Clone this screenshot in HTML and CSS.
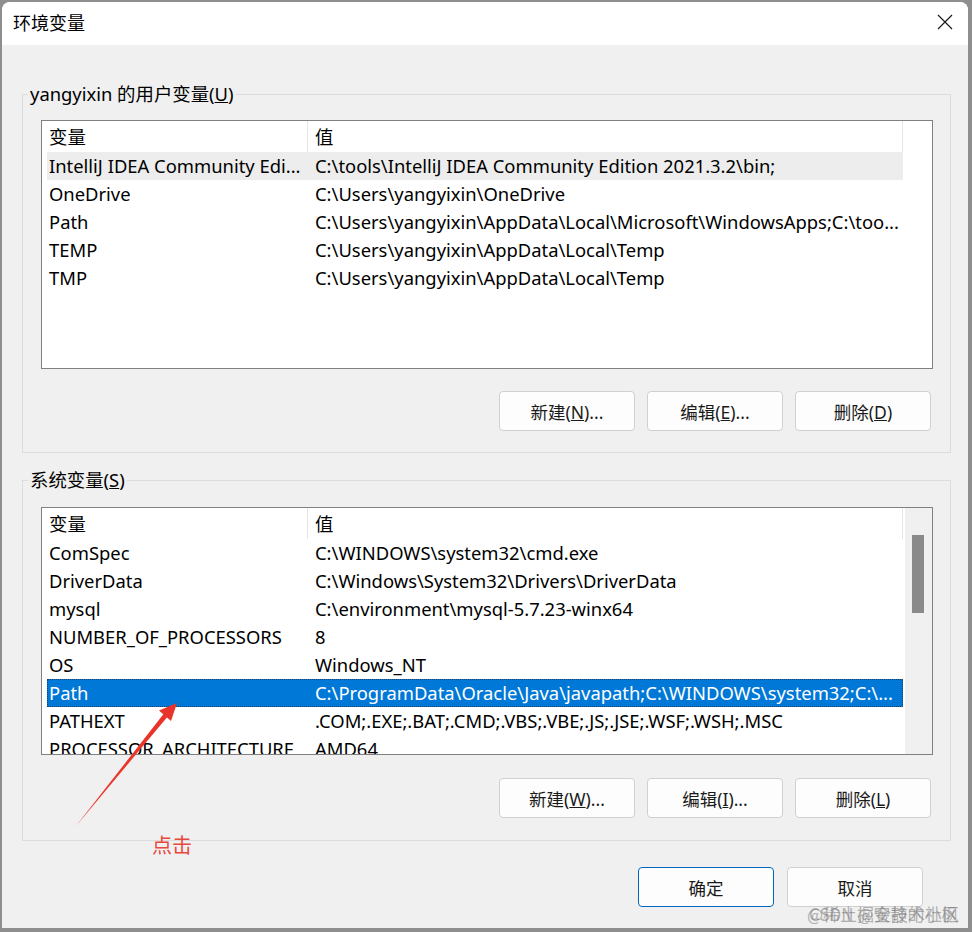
FILE: index.html
```html
<!doctype html>
<html>
<head>
<meta charset="utf-8">
<title>环境变量</title>
<link rel="stylesheet" href="styles.css">
</head>
<body>

<div class="dialog">
	<div class="titlebar">
		<span class="title">环境变量</span>
		<svg class="close" width="16" height="16" viewBox="0 0 16 16"><path d="M1 1 L15 15 M15 1 L1 15" stroke="#1a1a1a" stroke-width="1.2" fill="none"/></svg>
	</div>

	<div class="content">
		<fieldset class="group">
			<legend>yangyixin 的用户变量(<u>U</u>)</legend>
			<div class="list">
				<div class="list-main">
					<div class="list-head">
						<div class="col">变量</div>
						<div class="col">值</div>
					</div>
					<div class="row hover"><div class="cell">IntelliJ IDEA Community Edi...</div><div class="cell">C:\tools\IntelliJ IDEA Community Edition 2021.3.2\bin;</div></div>
					<div class="row"><div class="cell">OneDrive</div><div class="cell">C:\Users\yangyixin\OneDrive</div></div>
					<div class="row"><div class="cell">Path</div><div class="cell">C:\Users\yangyixin\AppData\Local\Microsoft\WindowsApps;C:\too...</div></div>
					<div class="row"><div class="cell">TEMP</div><div class="cell">C:\Users\yangyixin\AppData\Local\Temp</div></div>
					<div class="row"><div class="cell">TMP</div><div class="cell">C:\Users\yangyixin\AppData\Local\Temp</div></div>
				</div>
				<div class="list-side"></div>
			</div>
			<div class="buttons">
				<button class="btn">新建(<u>N</u>)...</button>
				<button class="btn">编辑(<u>E</u>)...</button>
				<button class="btn">删除(<u>D</u>)</button>
			</div>
		</fieldset>

		<fieldset class="group group-sys">
			<legend>系统变量(<u>S</u>)</legend>
			<div class="list">
				<div class="list-main">
					<div class="list-head">
						<div class="col">变量</div>
						<div class="col">值</div>
					</div>
					<div class="row"><div class="cell">ComSpec</div><div class="cell">C:\WINDOWS\system32\cmd.exe</div></div>
					<div class="row"><div class="cell">DriverData</div><div class="cell">C:\Windows\System32\Drivers\DriverData</div></div>
					<div class="row"><div class="cell">mysql</div><div class="cell">C:\environment\mysql-5.7.23-winx64</div></div>
					<div class="row"><div class="cell">NUMBER_OF_PROCESSORS</div><div class="cell">8</div></div>
					<div class="row"><div class="cell">OS</div><div class="cell">Windows_NT</div></div>
					<div class="row selected"><div class="cell">Path</div><div class="cell">C:\ProgramData\Oracle\Java\javapath;C:\WINDOWS\system32;C:\...</div></div>
					<div class="row"><div class="cell">PATHEXT</div><div class="cell">.COM;.EXE;.BAT;.CMD;.VBS;.VBE;.JS;.JSE;.WSF;.WSH;.MSC</div></div>
					<div class="row"><div class="cell">PROCESSOR_ARCHITECTURE</div><div class="cell">AMD64</div></div>
				</div>
				<div class="list-side">
					<div class="scrollbar"><div class="thumb"></div></div>
				</div>
			</div>
			<div class="buttons">
				<button class="btn">新建(<u>W</u>)...</button>
				<button class="btn">编辑(<u>I</u>)...</button>
				<button class="btn">删除(<u>L</u>)</button>
			</div>
		</fieldset>

		<div class="actions">
			<button class="btn primary">确定</button>
			<button class="btn">取消</button>
		</div>
	</div>

	<!-- annotation drawn on the screenshot -->
	<svg class="arrow" width="972" height="932" viewBox="0 0 972 932">
		<path d="M76 826 L165.5 711.5 L169 715 Z" fill="#e8352b"/>
		<path d="M177 703 L159 710.5 L171 721 Z" fill="#e8352b"/>
	</svg>
	<span class="note">点击</span>

	<div class="watermark">
		<span>@稀土掘金技术社区</span>
		<span class="wm2">CSDN @安静的小枫</span>
	</div>
</div>

</body>
</html>
```

FILE: styles.css
```css
body {
	margin: 0;
	background-color: #8e8e8e;
	font-family: "Noto Sans", "Noto Sans CJK SC", sans-serif;
	color: #000000;
}

.dialog {
	position: relative;
	margin: 2px 0 0 2px;
	width: 966px;
	height: 926px;
	background-color: #f0f0f0;
	border-radius: 8px 8px 0 0;
	overflow: hidden;
}

.titlebar {
	height: 43px;
	box-sizing: border-box;
	background: #ffffff;
	display: flex;
	align-items: center;
	justify-content: space-between;
	padding: 0 15px 3px 11px;
}

.title {
	font-size: 18px;
}

.close {
	display: block;
}

.content {
	padding: 37px 17px 0 20px;
}

.group {
	margin: 0;
	padding: 14px 17px 21px 18px;
	border: 1px solid #dcdcdc;
	min-width: 0;
}

.group legend {
	font-size: 18.4px;
	line-height: 24px;
	padding: 0 2px;
	margin-left: -13px;
}

.group-sys {
	margin-top: 15px;
	padding-top: 15px;
	padding-bottom: 22px;
}

.list {
	height: 249px;
	box-sizing: border-box;
	border: 1px solid #808080;
	background: #ffffff;
	display: flex;
	font-size: 18.4px;
}

.group-sys .list {
	height: 248px;
}

.list-main {
	width: 861px;
	overflow: hidden;
}

.list-head {
	height: 31px;
	display: grid;
	grid-template-columns: 266px 1fr;
	align-items: center;
	border-right: 1px solid #e5e5e5;
	box-sizing: border-box;
}

.list-head .col {
	padding-left: 7px;
	line-height: 31px;
}

.list-head .col:first-child {
	border-right: 1px solid #e5e5e5;
	box-sizing: border-box;
}

.row {
	height: 28px;
	margin-left: 5px;
	display: grid;
	grid-template-columns: 261px 1fr;
	align-items: center;
	box-sizing: border-box;
}

.cell {
	white-space: nowrap;
	overflow: hidden;
	text-overflow: ellipsis;
	line-height: 28px;
}

.cell:first-child {
	padding-left: 2px;
}

.cell + .cell {
	padding-left: 7px;
	padding-right: 2px;
}

.row.hover {
	background: #ededed;
}

.row.selected {
	background: #0078d7;
	color: #ffffff;
	outline: 1px dotted #1e3f66;
	outline-offset: -1px;
}

.list-side {
	flex: 1;
	padding-left: 2px;
}

.scrollbar {
	height: 100%;
	background: #f0f0f0;
	padding: 27px 8px 0 7px;
	box-sizing: border-box;
}

.thumb {
	height: 78px;
	background: #8a8a8a;
}

.buttons {
	display: flex;
	justify-content: flex-end;
	gap: 12px;
	margin-top: 22px;
	padding-right: 2px;
}

.group-sys .buttons {
	margin-top: 23px;
}

.btn {
	width: 136px;
	height: 40px;
	border: 1px solid #d0d0d0;
	border-radius: 4px;
	background: #fdfdfd;
	font-family: "Noto Sans", "Noto Sans CJK SC", sans-serif;
	font-size: 17.5px;
	color: #1a1a1a;
	padding: 0;
}

.btn.primary {
	border-color: #0067c0;
}

.actions {
	display: flex;
	justify-content: flex-end;
	gap: 13px;
	margin-top: 26px;
	padding-right: 28px;
}

.arrow {
	position: absolute;
	left: -2px;
	top: -2px;
	pointer-events: none;
}

.note {
	position: absolute;
	left: 150px;
	top: 828px;
	font-size: 20px;
	color: #e8483e;
	font-family: "Noto Sans CJK SC", sans-serif;
}

.watermark {
	position: absolute;
	left: 805px;
	top: 899px;
	font-size: 17px;
	font-family: "Noto Sans CJK SC", sans-serif;
	color: rgba(110, 110, 110, 0.5);
	white-space: nowrap;
}

.watermark .wm2 {
	position: absolute;
	left: 2px;
	top: 0;
}
```
